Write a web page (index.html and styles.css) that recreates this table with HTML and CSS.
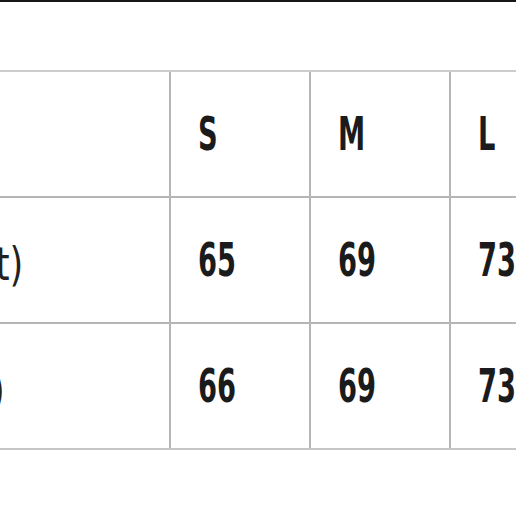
FILE: index.html
```html
<!DOCTYPE html>
<html lang="ko">
<head>
<meta charset="utf-8">
<link rel="stylesheet" href="styles.css">
</head>
<body>
<div class="topbar"></div>
<div class="sheet">
  <div class="grid">
    <div class="cell head first"></div>
    <div class="cell head"><span class="v">S</span></div>
    <div class="cell head"><span class="v">M</span></div>
    <div class="cell head"><span class="v">L</span></div>

    <div class="cell first row"><span class="label lab2">가슴(Chest)</span></div>
    <div class="cell row"><span class="v">65</span></div>
    <div class="cell row"><span class="v">69</span></div>
    <div class="cell row"><span class="v">73</span></div>

    <div class="cell first row"><span class="label lab3">총장(Length)</span></div>
    <div class="cell row"><span class="v">66</span></div>
    <div class="cell row"><span class="v">69</span></div>
    <div class="cell row"><span class="v">73</span></div>
  </div>
</div>
</body>
</html>
```
FILE: styles.css
```css
html, body {
  margin: 0;
  padding: 0;
  background: #fff;
  width: 516px;
  height: 516px;
  overflow: hidden;
}
.topbar {
  height: 2px;
  background: #161616;
}
.sheet {
  padding-top: 68px;
}
.grid {
  display: grid;
  grid-template-columns: 169px 140px 140px 67px;
  border-top: 2px solid #cccccc;
  border-bottom: 2px solid #c6c6c6;
  width: 516px;
}
.cell {
  height: 124px;
  display: flex;
  align-items: center;
  padding-left: 27px;
  border-left: 2px solid #b5b5b5;
  font-family: "DejaVu Sans Condensed", "Noto Sans CJK KR", sans-serif;
  font-weight: bold;
  font-size: 46px;
  color: #1b1b1b;
  overflow: hidden;
  white-space: nowrap;
}
.row {
  border-top: 2px solid #b5b5b5;
}
.first {
  border-left: none;
  padding-left: 0;
  justify-content: flex-end;
}
.v {
  display: inline-block;
  transform: scaleX(0.66);
  transform-origin: left center;
}
.label {
  flex: none;
  display: inline-block;
  font-family: "DejaVu Sans Condensed", "Noto Sans CJK KR", sans-serif;
  font-weight: normal;
  font-size: 46px;
  color: #222;
  transform: scaleX(0.85);
  transform-origin: right center;
}
.lab2 {
  margin-right: 146px;
}
.lab3 {
  margin-right: 164px;
}
```
